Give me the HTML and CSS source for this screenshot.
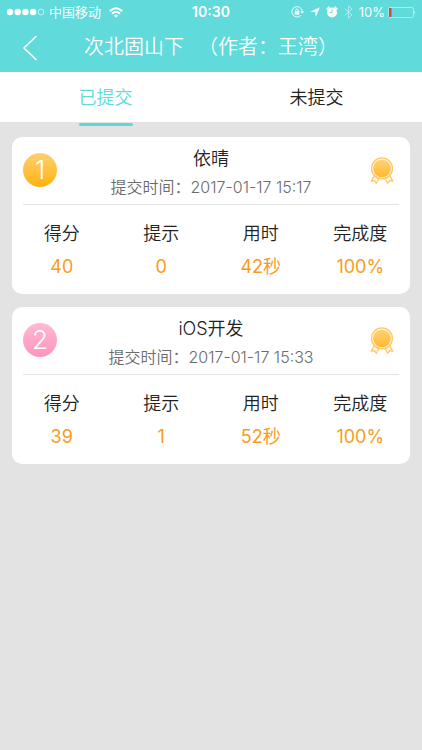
FILE: index.html
```html
<!DOCTYPE html>
<html lang="zh-CN">
<head>
<meta charset="utf-8">
<meta name="viewport" content="width=device-width, initial-scale=1">
<title>次北固山下</title>
<link rel="stylesheet" href="styles.css">
</head>
<body>
<svg width="0" height="0" class="defs" aria-hidden="true">
  <defs>
    <linearGradient id="gold" x1="0" y1="0" x2="0" y2="1">
      <stop offset="0" stop-color="#ffd374"/>
      <stop offset="1" stop-color="#ffb932"/>
    </linearGradient>
    <symbol id="medal" viewBox="0 0 24 28">
      <g fill="#fffaf0" stroke="#ffc661" stroke-width="1.3" stroke-linejoin="round">
        <path d="M4.500 18.500.8 25 4.200 24.600 6 27.200 9.500 21.500Z"/>
        <path d="M19.500 18.500 23.200 25 19.800 24.600 18 27.200 14.500 21.500Z"/>
        <circle cx="12" cy="11.800" r="10.800"/>
      </g>
      <circle cx="12" cy="11.800" r="9.200" fill="url(#gold)"/>
    </symbol>
  </defs>
</svg>

<header class="top">
  <div class="status">
    <div class="status-left">
      <svg width="39" height="8" viewBox="0 0 39 8" aria-hidden="true">
        <g fill="#fff"><circle cx="4" cy="4" r="3.200"/><circle cx="11.700" cy="4" r="3.200"/><circle cx="19.400" cy="4" r="3.200"/><circle cx="27.100" cy="4" r="3.200"/></g>
        <circle cx="35" cy="4" r="2.900" fill="none" stroke="#fff" stroke-width=".6"/>
      </svg>
      <span class="carrier">中国移动</span>
      <svg class="wifi" width="14" height="11" viewBox="0 0 14 11" fill="none" stroke="#fff" stroke-width="1.900" aria-hidden="true">
        <path d="M.8 4.200Q7-1.800 13.200 4.200"/>
        <path d="M3 6.700Q7 2.900 11 6.700"/>
        <path d="M7 10.700 4.700 8.400Q7 6.400 9.300 8.400Z" fill="#fff" stroke="none"/>
      </svg>
    </div>
    <time class="clock">10:30</time>
    <div class="status-right">
      <svg width="13" height="12" viewBox="0 0 13 12" fill="none" stroke="#fff" aria-hidden="true">
        <path d="M9.800 9.400A5.200 5.200 0 1 1 11.200 5.200" stroke-width=".9"/>
        <path d="M9.200 5.200h3.800L11.100 7.800Z" fill="#fff" stroke="none"/>
        <path d="M4.700 5.500V4.300a1.300 1.300 0 0 1 2.600 0V5.500" stroke-width=".9"/>
        <path d="M3.700 5.300h4.600v3.400H3.700Z" fill="#fff" stroke="none"/>
      </svg>
      <svg width="10" height="10" viewBox="0 0 10 10" aria-hidden="true"><path d="M9.900.2 5.700 9.900 5.200 5 .1 4.800Z" fill="#fff"/></svg>
      <svg width="12" height="12" viewBox="0 0 12 12" aria-hidden="true">
        <circle cx="6" cy="6.400" r="5" fill="#fff"/>
        <path d="M1 3 3 1.200M11 3 9 1.200" stroke="#fff" stroke-width="1.600" stroke-linecap="round"/>
        <path d="M6 3.400V6.600H3.800" fill="none" stroke="#60dada" stroke-width="1"/>
      </svg>
      <svg width="9" height="14" viewBox="0 0 9 14" aria-hidden="true"><path d="M.8 3.700 8 10 4.500 13.200V.8L8 4 .8 10.300" fill="none" stroke="#b0eded" stroke-width="1"/></svg>
      <span class="percent">10%</span>
      <svg class="battery" width="28" height="11" viewBox="0 0 28 11" aria-hidden="true">
        <rect x=".5" y=".5" width="25" height="10" rx="1.500" fill="none" stroke="#b0eded" stroke-width=".9"/>
        <rect x="1" y="1" width="2.500" height="9" fill="#d2493f"/>
        <path d="M26.500 3.800Q28 5.500 26.500 7.200Z" fill="#fff"/>
      </svg>
    </div>
  </div>
  <div class="nav">
    <button class="back" type="button" aria-label="返回">
      <svg width="16" height="26" viewBox="0 0 16 26" aria-hidden="true"><path d="M14.500 1 2 13 14.500 25" fill="none" stroke="#fff" stroke-width="1.600"/></svg>
    </button>
    <h1 class="title"><span>次北固山下</span> <span>（作者：王湾）</span></h1>
  </div>
</header>

<nav class="tabs">
  <button class="tab tab-active" type="button">已提交</button>
  <button class="tab" type="button">未提交</button>
</nav>

<main class="list">
  <article class="card">
    <div class="card-head">
      <span class="rank rank-gold">1</span>
      <div class="who">
        <h2 class="name">依晴</h2>
        <p class="time">提交时间：<time>2017-01-17 15:17</time></p>
      </div>
      <svg class="medal" width="24" height="27" aria-hidden="true"><use href="#medal"/></svg>
    </div>
    <table class="stats">
      <thead><tr><th>得分</th><th>提示</th><th>用时</th><th>完成度</th></tr></thead>
      <tbody><tr><td>40</td><td>0</td><td>42秒</td><td>100%</td></tr></tbody>
    </table>
  </article>
  <article class="card">
    <div class="card-head">
      <span class="rank rank-pink">2</span>
      <div class="who">
        <h2 class="name">iOS开发</h2>
        <p class="time">提交时间：<time>2017-01-17 15:33</time></p>
      </div>
      <svg class="medal" width="24" height="27" aria-hidden="true"><use href="#medal"/></svg>
    </div>
    <table class="stats">
      <thead><tr><th>得分</th><th>提示</th><th>用时</th><th>完成度</th></tr></thead>
      <tbody><tr><td>39</td><td>1</td><td>52秒</td><td>100%</td></tr></tbody>
    </table>
  </article>
</main>
</body>
</html>
```

FILE: styles.css
```css
* { box-sizing: border-box; }

body {
  margin: 0;
  min-height: 100vh;
  background: #e3e3e3;
  color: #222;
  font-family: Inter, "Noto Sans CJK SC", sans-serif;
  font-size: 18px;
  font-weight: 350;
}

h1, h2, p { margin: 0; font-weight: inherit; }

button {
  padding: 0;
  border: 0;
  background: none;
  color: inherit;
  font: inherit;
}

svg { display: block; flex: none; }
.defs { position: absolute; }

.top { background: #60dada; color: #fff; }

.status {
  display: grid;
  grid-template-columns: 1fr auto 1fr;
  align-items: center;
  height: 24px;
  padding: 0 6px;
  font-size: 13px;
  font-weight: 400;
  line-height: 24px;
}
.status-left, .status-right { display: flex; align-items: center; }
.status-left { gap: 4px; }
.status-right { justify-content: flex-end; gap: 6px; }
.wifi { margin-left: 4px; }
.clock { font-size: 14px; font-weight: 600; }
.battery { margin-left: -3px; }

.nav {
  display: grid;
  grid-template-columns: 60px 1fr 60px;
  align-items: center;
  height: 48px;
}
.back { display: flex; justify-content: center; align-items: center; height: 48px; }
.title {
  display: flex;
  justify-content: center;
  gap: 14px;
  padding-bottom: 4px;
  font-family: "Noto Sans CJK SC", sans-serif;
  font-size: 20px;
  line-height: 44px;
  white-space: nowrap;
}

.tabs {
  display: grid;
  grid-template-columns: 1fr 1fr;
  justify-items: center;
  height: 50px;
  background: #fff;
}
.tab { position: relative; padding-top: 2px; line-height: 48px; }
.tab-active { color: #60dada; }
.tab-active::after {
  content: "";
  position: absolute;
  inset: auto 0 -4px;
  height: 3px;
  border-radius: 2px;
  background: #60d6da;
}

.list {
  display: flex;
  flex-direction: column;
  gap: 13px;
  padding: 15px 12px;
}
.card { padding-bottom: 11px; border-radius: 10px; background: #fff; }
.card-head {
  display: grid;
  grid-template-columns: 34px 1fr 34px;
  align-items: center;
  margin: 0 11px;
  height: 68px;
  padding-bottom: 1px;
  border-bottom: 1px solid #e3e3e3;
}
.rank {
  height: 34px;
  border-radius: 50%;
  color: #fff;
  font-size: 26px;
  font-weight: 300;
  line-height: 34px;
  text-align: center;
}
.rank-gold { background: linear-gradient(#ffd070, #ffb310); }
.rank-pink { background: linear-gradient(#ffb8d2, #ff94bd); }
.who { padding-top: 5px; text-align: center; }
.name { font-size: 18px; line-height: 28px; }
.time { color: #6c6c6c; font-size: 16px; line-height: 28px; }
.medal { justify-self: center; }

.stats {
  width: 100%;
  margin-top: 12px;
  border-collapse: collapse;
  table-layout: fixed;
  text-align: center;
}
.stats th, .stats td { padding: 0; font-weight: inherit; line-height: 33px; }
.stats td { color: #f99c1c; font-weight: 400; }
```
